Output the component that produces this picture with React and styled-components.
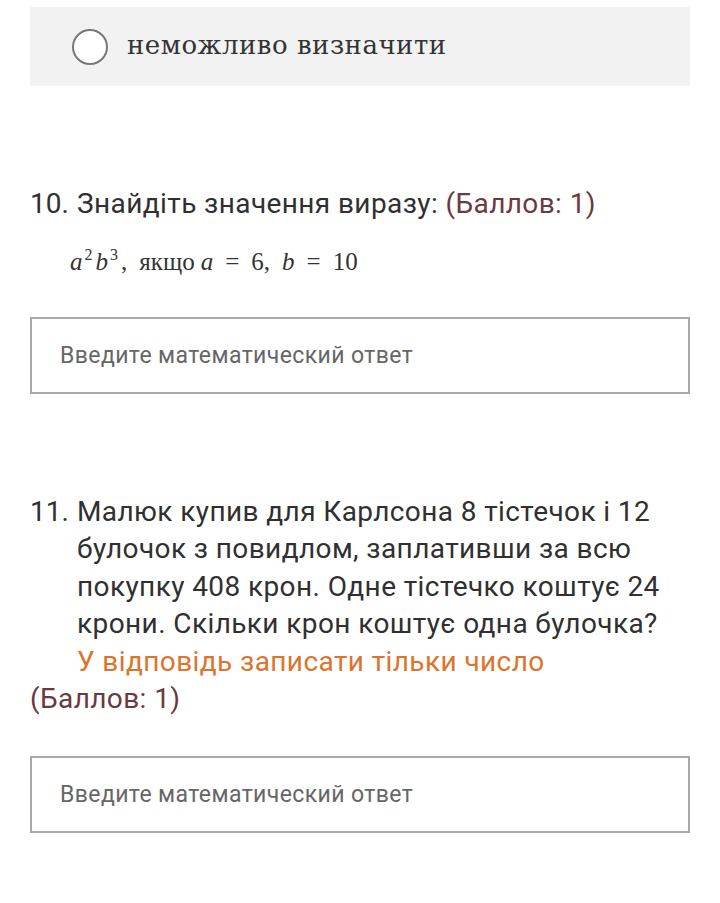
import React from "react";
import styled, { createGlobalStyle } from "styled-components";

const Global = createGlobalStyle`
  html, body { margin: 0; padding: 0; background: #fff; }
  body { font-family: Roboto, "Noto Sans", sans-serif; color: #333; }
`;

const Page = styled.div`
  padding: 7px 30px 60px;
  display: flex;
  flex-direction: column;
`;

const Option = styled.div`
  height: 79px;
  background: #f2f2f2;
  display: flex;
  align-items: center;
  gap: 19px;
  padding-left: 42px;
`;

const Radio = styled.span`
  width: 32px;
  height: 32px;
  border: 2px solid #777;
  border-radius: 50%;
  background: #fff;
  flex: none;
`;

const OptionText = styled.span`
  font-family: "DejaVu Serif", "Liberation Serif", serif;
  font-size: 26px;
  color: #333;
  letter-spacing: 0.5px;
  margin-top: -3px;
`;

const Question = styled.section`
  margin-top: ${(p) => p.$top}px;
  display: flex;
  flex-direction: column;
`;

const Heading = styled.div`
  display: flex;
  font-size: 28px;
  letter-spacing: 0.4px;
  line-height: 37.5px;
  color: #303030;
`;

const Num = styled.span`
  width: 47px;
  flex: none;
  letter-spacing: 0;
`;

const Body = styled.div`
  flex: 1;
`;

const Points = styled.span`
  color: #6a3a3f;
  font-size: 28px;
  letter-spacing: 0.4px;
  line-height: 37.5px;
`;

const Note = styled.div`
  color: #dc742c;
`;

const Math = styled.div`
  margin: 24px 0 0 40px;
  font-family: "Liberation Serif", "Times New Roman", serif;
  font-size: 25px;
  line-height: 30px;
  color: #333;
  white-space: nowrap;
`;

const V = styled.i`
  font-style: italic;
`;

const Sup = styled.sup`
  font-size: 16px;
  vertical-align: 10px;
  line-height: 0;
  margin: 0 3px 0 2px;
`;

const Word = styled.span`
  margin: 0 6px 0 12px;
`;

const Op = styled.span`
  margin: 0 12px;
`;

const Gap = styled.span`
  display: inline-block;
  width: 12px;
`;

const Answer = styled.input`
  margin-top: ${(p) => p.$top}px;
  box-sizing: border-box;
  height: 77px;
  width: 100%;
  border: 2px solid #a9a9a9;
  border-radius: 0;
  padding: 0 28px;
  font-family: Roboto, "Noto Sans", sans-serif;
  font-size: 23px;
  letter-spacing: 0.4px;
  color: #333;
  background: #fff;
  outline: none;
  &::placeholder { color: #666; }
`;

export default function App() {
  return (
    <>
      <Global />
      <Page>
        <Option>
          <Radio />
          <OptionText>неможливо визначити</OptionText>
        </Option>

        <Question $top={99}>
          <Heading>
            <Num>10.</Num>
            <Body>
              Знайдіть значення виразу: <Points>(Баллов: 1)</Points>
            </Body>
          </Heading>
          <Math>
            <V>a</V><Sup>2</Sup><V>b</V><Sup>3</Sup>,<Word>якщо</Word><V>a</V>
            <Op>=</Op>6,<Gap /><V>b</V><Op>=</Op>10
          </Math>
          <Answer $top={40} placeholder="Введите математический ответ" />
        </Question>

        <Question $top={99}>
          <Heading>
            <Num>11.</Num>
            <Body>
              Малюк купив для Карлсона 8 тістечок і 12 булочок з повидлом,
              заплативши за всю покупку 408 крон. Одне тістечко коштує 24
              крони. Скільки крон коштує одна булочка?
              <Note>У відповідь записати тільки число</Note>
            </Body>
          </Heading>
          <Points>(Баллов: 1)</Points>
          <Answer $top={38} placeholder="Введите математический ответ" />
        </Question>
      </Page>
    </>
  );
}
